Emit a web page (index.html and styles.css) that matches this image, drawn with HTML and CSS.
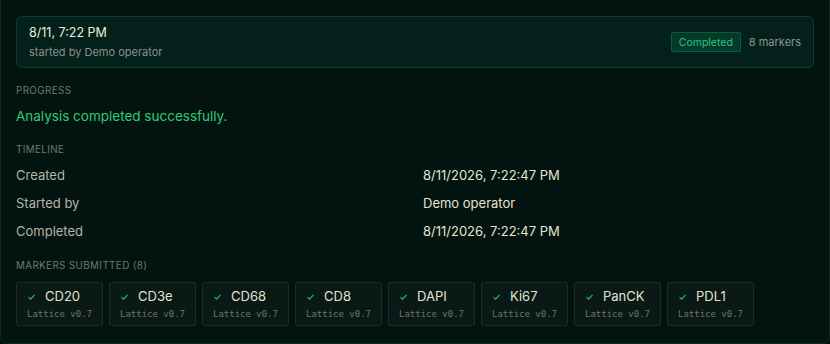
FILE: index.html
```html
<!DOCTYPE html>
<html>
<head>
<meta charset="utf-8">
<link rel="stylesheet" href="styles.css">
</head>
<body>
<div class="panel">
  <div class="run-card">
    <div class="run-info">
      <div class="run-title">8/11, 7:22 PM</div>
      <div class="run-sub">started by Demo operator</div>
    </div>
    <div class="run-meta">
      <span class="badge">Completed</span>
      <span class="count">8 markers</span>
    </div>
  </div>

  <section class="section progress">
    <div class="label">PROGRESS</div>
    <div class="success">Analysis completed successfully.</div>
  </section>

  <section class="section timeline">
    <div class="label">TIMELINE</div>
    <div class="tl-grid">
      <div class="tl-key">Created</div><div class="tl-val">8/11/2026, 7:22:47 PM</div>
      <div class="tl-key">Started by</div><div class="tl-val">Demo operator</div>
      <div class="tl-key">Completed</div><div class="tl-val">8/11/2026, 7:22:47 PM</div>
    </div>
  </section>

  <section class="section markers">
    <div class="label">MARKERS SUBMITTED (8)</div>
    <div class="chips">
      <div class="chip"><div class="chip-name"><svg class="check" viewBox="0 0 7 6"><path d="M0.5 3.1 L2.6 5.1 L6.5 0.8"/></svg>CD20</div><div class="chip-ver">Lattice v0.7</div></div>
      <div class="chip"><div class="chip-name"><svg class="check" viewBox="0 0 7 6"><path d="M0.5 3.1 L2.6 5.1 L6.5 0.8"/></svg>CD3e</div><div class="chip-ver">Lattice v0.7</div></div>
      <div class="chip"><div class="chip-name"><svg class="check" viewBox="0 0 7 6"><path d="M0.5 3.1 L2.6 5.1 L6.5 0.8"/></svg>CD68</div><div class="chip-ver">Lattice v0.7</div></div>
      <div class="chip"><div class="chip-name"><svg class="check" viewBox="0 0 7 6"><path d="M0.5 3.1 L2.6 5.1 L6.5 0.8"/></svg>CD8</div><div class="chip-ver">Lattice v0.7</div></div>
      <div class="chip"><div class="chip-name"><svg class="check" viewBox="0 0 7 6"><path d="M0.5 3.1 L2.6 5.1 L6.5 0.8"/></svg>DAPI</div><div class="chip-ver">Lattice v0.7</div></div>
      <div class="chip"><div class="chip-name"><svg class="check" viewBox="0 0 7 6"><path d="M0.5 3.1 L2.6 5.1 L6.5 0.8"/></svg>Ki67</div><div class="chip-ver">Lattice v0.7</div></div>
      <div class="chip"><div class="chip-name"><svg class="check" viewBox="0 0 7 6"><path d="M0.5 3.1 L2.6 5.1 L6.5 0.8"/></svg>PanCK</div><div class="chip-ver">Lattice v0.7</div></div>
      <div class="chip"><div class="chip-name"><svg class="check" viewBox="0 0 7 6"><path d="M0.5 3.1 L2.6 5.1 L6.5 0.8"/></svg>PDL1</div><div class="chip-ver">Lattice v0.7</div></div>
    </div>
  </section>
</div>
</body>
</html>
```

FILE: styles.css
```css
html, body {
  margin: 0;
  padding: 0;
  background: #03110d;
}
body {
  font-family: Inter, "DejaVu Sans", sans-serif;
  color: #dcdccc;
  width: 830px;
  height: 344px;
  overflow: hidden;
}
.panel {
  box-sizing: border-box;
  width: 830px;
  height: 344px;
  padding: 16px 15px 0 15px;
  border: 1px solid #0d2a22;
  border-top: 0;
  border-radius: 0 0 8px 8px;
  background: #03130f;
  display: flex;
  flex-direction: column;
}
.run-card {
  display: flex;
  align-items: center;
  justify-content: space-between;
  height: 52px;
  box-sizing: border-box;
  padding: 0 12px;
  background: #04201a;
  border: 1px solid #0f3a2d;
  border-radius: 6px;
}
.run-info {
  display: flex;
  flex-direction: column;
  gap: 3px;
}
.run-title {
  font-size: 12.5px;
  line-height: 16px;
  color: #ecebdc;
}
.run-sub {
  font-size: 11px;
  line-height: 16px;
  color: #8a918c;
}
.run-meta {
  display: flex;
  align-items: center;
  gap: 8px;
}
.badge {
  box-sizing: border-box;
  height: 20px;
  width: 70px;
  display: flex;
  align-items: center;
  justify-content: center;
  font-size: 10.5px;
  color: #2fc27c;
  background: #053a2a;
  border: 1px solid #0d5a3e;
  border-radius: 2px;
}
.count {
  font-size: 11px;
  color: #8f948f;
}
.section {
  display: flex;
  flex-direction: column;
}
.label {
  font-size: 9.8px;
  line-height: 14px;
  letter-spacing: 0.4px;
  color: #71776f;
}
.progress {
  margin-top: 16px;
  gap: 9px;
}
.success {
  font-size: 13.5px;
  line-height: 18px;
  color: #2dcc78;
}
.timeline {
  margin-top: 18px;
  gap: 9px;
}
.tl-grid {
  display: grid;
  grid-template-columns: 1fr 1fr;
  column-gap: 16px;
  row-gap: 10px;
  font-size: 13px;
  line-height: 18px;
}
.tl-key {
  color: #b4b6a8;
}
.tl-val {
  color: #e4e3d3;
}
.markers {
  margin-top: 19px;
  gap: 9px;
}
.chips {
  display: flex;
  gap: 6px;
}
.chip {
  box-sizing: border-box;
  width: 87px;
  height: 44px;
  padding: 5px 4px 5px 10px;
  background: #0a1915;
  border: 1px solid #1b2b27;
  border-radius: 2px;
  display: flex;
  flex-direction: column;
  gap: 4px;
}
.chip-name {
  display: flex;
  align-items: center;
  font-size: 13px;
  line-height: 16px;
  color: #e2e2d2;
  white-space: nowrap;
}
.check {
  width: 7px;
  height: 6px;
  margin: 2px 10px 0 1px;
  fill: none;
  stroke: #2bb56c;
  stroke-width: 1.2;
}
.chip-ver {
  font-family: "DejaVu Sans Mono", monospace;
  font-size: 9px;
  line-height: 12px;
  color: #6c746f;
  white-space: nowrap;
}
```
